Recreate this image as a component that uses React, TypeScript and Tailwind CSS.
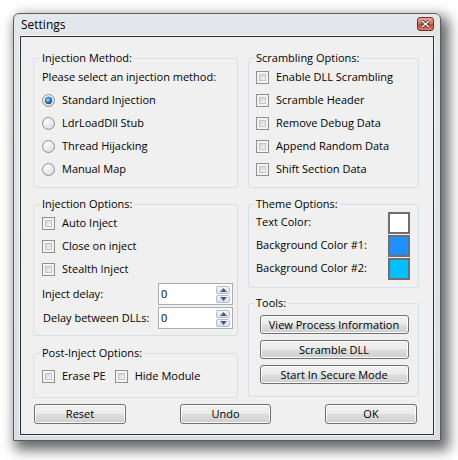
import React from "react";

const Radio = ({ checked }: { checked?: boolean }) => (
  <svg width="13" height="13" viewBox="0 0 13 13" className="shrink-0">
    <defs>
      <radialGradient id="rg-off" cx="0.35" cy="0.3" r="0.8">
        <stop offset="0" stopColor="#ffffff" />
        <stop offset="1" stopColor="#d2d4d6" />
      </radialGradient>
      <radialGradient id="rg-on" cx="0.4" cy="0.35" r="0.7">
        <stop offset="0" stopColor="#9fdcfb" />
        <stop offset="0.55" stopColor="#2a8ad4" />
        <stop offset="1" stopColor="#0b3f75" />
      </radialGradient>
    </defs>
    <circle cx="6.5" cy="6.5" r="6" fill="url(#rg-off)" stroke="#8e8f8f" />
    <circle cx="6.5" cy="6.5" r="4.2" fill="none" stroke="#f4f4f4" strokeWidth="0.8" />
    {checked && <circle cx="6.5" cy="6.5" r="3.4" fill="url(#rg-on)" stroke="#1d4f7c" strokeWidth="0.6" />}
  </svg>
);

const Check = () => (
  <div className="w-[13px] h-[13px] shrink-0 border border-[#8e8f8f] bg-[#f4f4f4] p-[2px]">
    <div className="w-full h-full border border-[#c4c4c4] bg-[linear-gradient(135deg,#d3d3d3,#f7f7f7)]" />
  </div>
);

const Btn = ({ label, w }: { label: string; w: string }) => (
  <button
    className={`${w} h-[20px] rounded-[3px] border border-[#707070] bg-[linear-gradient(#f2f2f2,#ebebeb_48%,#dddddd_52%,#cfcfcf)] shadow-[inset_0_0_0_1px_#fbfbfb] text-[11px] leading-[16px] text-black`}
  >
    {label}
  </button>
);

const ToolBtn = ({ label }: { label: string }) => (
  <button className="w-[149px] h-[19px] rounded-[3px] border border-[#707070] bg-[linear-gradient(#f2f2f2,#ebebeb_48%,#dddddd_52%,#cfcfcf)] shadow-[inset_0_0_0_1px_#fbfbfb] text-[11px] leading-[15px] text-black">
    {label}
  </button>
);

const Spin = () => (
  <div className="w-[75px] h-[22px] border border-[#abadb3] bg-white flex items-center justify-between pl-[2px] pr-[2px]">
    <span className="text-[11px] leading-[14px]">0</span>
    <div className="flex flex-col gap-[1px]">
      {[0, 1].map((i) => (
        <div
          key={i}
          className="w-[14px] h-[8px] rounded-[2px] border border-[#b5bcc6] bg-[linear-gradient(#f4f6f8,#d9e0e8)] flex items-center justify-center"
        >
          <svg width="7" height="4" viewBox="0 0 7 4">
            <path d={i === 0 ? "M0 4 L3.5 0 L7 4 Z" : "M0 0 L3.5 4 L7 0 Z"} fill="#4b5e80" />
          </svg>
        </div>
      ))}
    </div>
  </div>
);

const Group = ({
  title,
  h,
  left,
  children,
}: {
  title: string;
  h: string;
  left?: boolean;
  children: React.ReactNode;
}) => (
  <fieldset
    className={`${h} border border-[#d5dfe5] rounded-[3px] ${left ? "pl-[8px] pr-[4px]" : "pl-[7px] pr-[8px]"}`}
  >
    <legend className="px-[2px] -ml-[2px] text-[11px] leading-[16px] text-black">{title}</legend>
    {children}
  </fieldset>
);

const Row = ({ children }: { children: React.ReactNode }) => (
  <div className="h-[23px] flex items-center gap-[7px] text-[11px] text-black">{children}</div>
);

export default function App() {
  return (
    <div className="min-h-screen bg-white pl-[13px] pt-[13px] font-['Open_Sans',sans-serif]">
      <div className="w-[428px] h-[428px] rounded-t-[6px] border border-[#5c5c5c] bg-[linear-gradient(#e4e8ed,#dadfe5)] shadow-[5px_6px_13px_3px_rgba(0,0,0,0.6)] flex flex-col px-[6px] pb-[5px]">
        {/* title bar */}
        <div className="h-[22px] flex items-start justify-between">
          <span className="pt-[3px] pl-[1px] text-[12px] leading-[16px] text-black">Settings</span>
          <div className="mt-[3px] w-[17px] h-[14px] rounded-[3px] border border-[#7d2e22] bg-[linear-gradient(#e6a593,#d27560_45%,#c04a2e_55%,#d6806a)] flex items-center justify-center">
            <svg width="9" height="8" viewBox="0 0 9 8">
              <path d="M1 1 L8 7 M8 1 L1 7" stroke="#3b2a2a" strokeWidth="3" />
              <path d="M1 1 L8 7 M8 1 L1 7" stroke="#ffffff" strokeWidth="1.6" />
            </svg>
          </div>
        </div>

        {/* client area */}
        <div className="flex-1 border border-[#2e2e2e] bg-[#f0f0f0] shadow-[0_0_0_1px_#f5f7f9] pt-[13px] pl-[12px]">
          <div className="flex gap-[10px]">
            {/* left column */}
            <div className="w-[205px] flex flex-col">
              <Group title="Injection Method:" h="h-[138px]" left>
                <Row>Please select an injection method:</Row>
                {["Standard Injection", "LdrLoadDll Stub", "Thread Hijacking", "Manual Map"].map((t, i) => (
                  <Row key={t}>
                    <Radio checked={i === 0} />
                    <span>{t}</span>
                  </Row>
                ))}
              </Group>

              <div className="mt-[8px]">
                <Group title="Injection Options:" h="h-[140px]" left>
                  {["Auto Inject", "Close on inject", "Stealth Inject"].map((t) => (
                    <Row key={t}>
                      <Check />
                      <span>{t}</span>
                    </Row>
                  ))}
                  <div className="mt-[1px] h-[24px] flex items-center text-[11px]">
                    <span className="w-[116px]">Inject delay:</span>
                    <Spin />
                  </div>
                  <div className="h-[24px] flex items-center text-[11px]">
                    <span className="w-[116px] pl-[1px]">Delay between DLLs:</span>
                    <Spin />
                  </div>
                </Group>
              </div>

              <div className="mt-[9px]">
                <Group title="Post-Inject Options:" h="h-[53px]" left>
                  <div className="mt-[4px]">
                    <Row>
                      <Check />
                      <span className="mr-[2px]">Erase PE</span>
                      <Check />
                      <span>Hide Module</span>
                    </Row>
                  </div>
                </Group>
              </div>
            </div>

            {/* right column */}
            <div className="w-[171px] flex flex-col">
              <Group title="Scrambling Options:" h="h-[138px]">
                {[
                  "Enable DLL Scrambling",
                  "Scramble Header",
                  "Remove Debug Data",
                  "Append Random Data",
                  "Shift Section Data",
                ].map((t) => (
                  <Row key={t}>
                    <Check />
                    <span>{t}</span>
                  </Row>
                ))}
              </Group>

              <div className="mt-[8px]">
                <Group title="Theme Options:" h="h-[92px]">
                  <div className="-mt-[1px]">
                    {[
                      ["Text Color:", "bg-white"],
                      ["Background Color #1:", "bg-[#1e90ff]"],
                      ["Background Color #2:", "bg-[#00bfff]"],
                    ].map(([t, c]) => (
                      <div key={t} className="h-[23px] flex items-center justify-between text-[11px] text-black">
                        <span>{t}</span>
                        <div className={`w-[22px] h-[22px] border-2 border-[#6e6e6e] ${c}`} />
                      </div>
                    ))}
                  </div>
                </Group>
              </div>

              <div className="mt-[7px]">
                <Group title="Tools:" h="h-[102px]">
                  <div className="mt-[4px] flex flex-col items-center gap-[6px] pl-[2px]">
                    <ToolBtn label="View Process Information" />
                    <ToolBtn label="Scramble DLL" />
                    <ToolBtn label="Start In Secure Mode" />
                  </div>
                </Group>
              </div>
            </div>
          </div>

          {/* bottom buttons */}
          <div className="mt-[6px] ml-[1px] w-[383px] flex justify-between">
            <Btn label="Reset" w="w-[92px]" />
            <Btn label="Undo" w="w-[91px]" />
            <Btn label="OK" w="w-[92px]" />
          </div>
        </div>
      </div>
    </div>
  );
}
